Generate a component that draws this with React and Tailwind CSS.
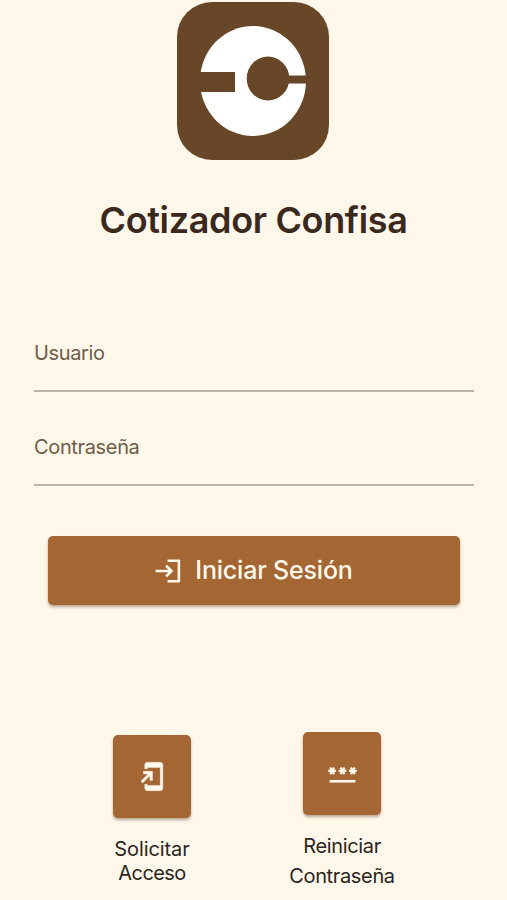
import React from 'react';

const Logo = () => (
  <svg className="w-[152px] h-[158px]" viewBox="0 0 152 158" aria-hidden="true">
    <rect width="152" height="158" rx="35" fill="#684729" />
    <ellipse cx="76" cy="79" rx="53" ry="55" fill="#fff" />
    <path d="M22 70H58V90H22z" fill="#684729" />
    <ellipse cx="91" cy="76.5" rx="21.3" ry="22" fill="#684729" />
    <path d="M108 73.5H131V81.5H108z" fill="#684729" />
  </svg>
);

const LoginIcon = () => (
  <svg
    className="w-[26px] h-[24px]"
    viewBox="0 0 26 24"
    fill="none"
    stroke="currentColor"
    strokeWidth="2.6"
    aria-hidden="true"
  >
    <path d="M12.5 1.7H23.9V22.3H12.5" strokeLinejoin="round" />
    <path d="M0.6 12H16.3M11.1 6.6L16.5 12L11.1 17.4" />
  </svg>
);

const RequestAccessIcon = () => (
  <svg
    className="size-[31px]"
    viewBox="0 0 24 24"
    fill="currentColor"
    stroke="currentColor"
    strokeWidth="0.3"
    aria-hidden="true"
  >
    <path d="M18 1H8c-1.1 0-2 .9-2 2v3h2V5h10v14H8v-1H6v3c0 1.1.9 2 2 2h10c1.1 0 2-.9 2-2V3c0-1.1-.9-2-2-2zM10 15h2V8H5v2h3.59L3 15.59 4.41 17 10 11.41V15z" />
  </svg>
);

const PasswordIcon = () => (
  <svg
    className="size-[31px]"
    viewBox="0 0 24 24"
    fill="none"
    stroke="currentColor"
    strokeWidth="1.75"
    aria-hidden="true"
  >
    <path d="M2 18H22" strokeWidth="2" />
    {[4, 12, 20].map((x) => (
      <g key={x} transform={`translate(${x} 10)`}>
        <path d="M-3 0H3M-1.5 -2.6L1.5 2.6M-1.5 2.6L1.5 -2.6" />
      </g>
    ))}
  </svg>
);

const Field = ({ label }) => (
  <label className="flex h-[94px] flex-col justify-end border-b-2 border-[#bdb5a8] pb-[23px]">
    <span className="text-[20px] leading-[28px] tracking-[-0.35px] text-[#6e5c49]">{label}</span>
  </label>
);

const ActionButton = ({ icon: Icon }) => (
  <button
    type="button"
    className="flex h-[83px] w-[78px] items-center justify-center rounded-[5px] bg-[#a46733] text-[#fff8ec] shadow-[0_2px_3px_rgba(80,50,20,0.4)]"
  >
    <Icon />
  </button>
);

const App = () => (
  <div className="flex h-[900px] w-[507px] flex-col overflow-hidden bg-[#fff7ea] pt-[2px] font-['Inter',sans-serif]">
    <div className="flex justify-center pr-[1px]">
      <Logo />
    </div>
    <h1 className="mt-[36px] text-center text-[36px] leading-[48px] font-semibold tracking-[-0.35px] text-[#3b291e]">
      Cotizador Confisa
    </h1>

    <form className="mt-[54px] flex flex-col pr-[33px] pl-[34px]">
      <Field label="Usuario" />
      <Field label="Contraseña" />
      <button
        type="button"
        className="mx-[14px] mt-[50px] flex h-[69px] items-center justify-center gap-[14px] rounded-[5px] bg-[#a46733] text-[#fff8ec] shadow-[0_2px_3px_rgba(80,50,20,0.4)]"
      >
        <LoginIcon />
        <span className="pt-px text-[25px] font-medium tracking-[-0.2px]">Iniciar Sesión</span>
      </button>
    </form>

    <div className="mt-[127px] flex gap-[70px] pl-[92px]">
      <div className="flex w-[120px] flex-col items-center pt-[3px]">
        <ActionButton icon={RequestAccessIcon} />
        <p className="mt-[19px] text-center text-[20px] leading-[24px] text-[#2a2620]">
          <span className="tracking-[-0.1px]">Solicitar</span>
          <br />
          <span className="tracking-[-0.6px]">Acceso</span>
        </p>
      </div>
      <div className="flex w-[120px] flex-col items-center">
        <ActionButton icon={PasswordIcon} />
        <p className="mt-[16px] text-center text-[20px] leading-[30px] tracking-[-0.35px] text-[#2a2620]">
          Reiniciar
          <br />
          Contraseña
        </p>
      </div>
    </div>
  </div>
);

export default App;
